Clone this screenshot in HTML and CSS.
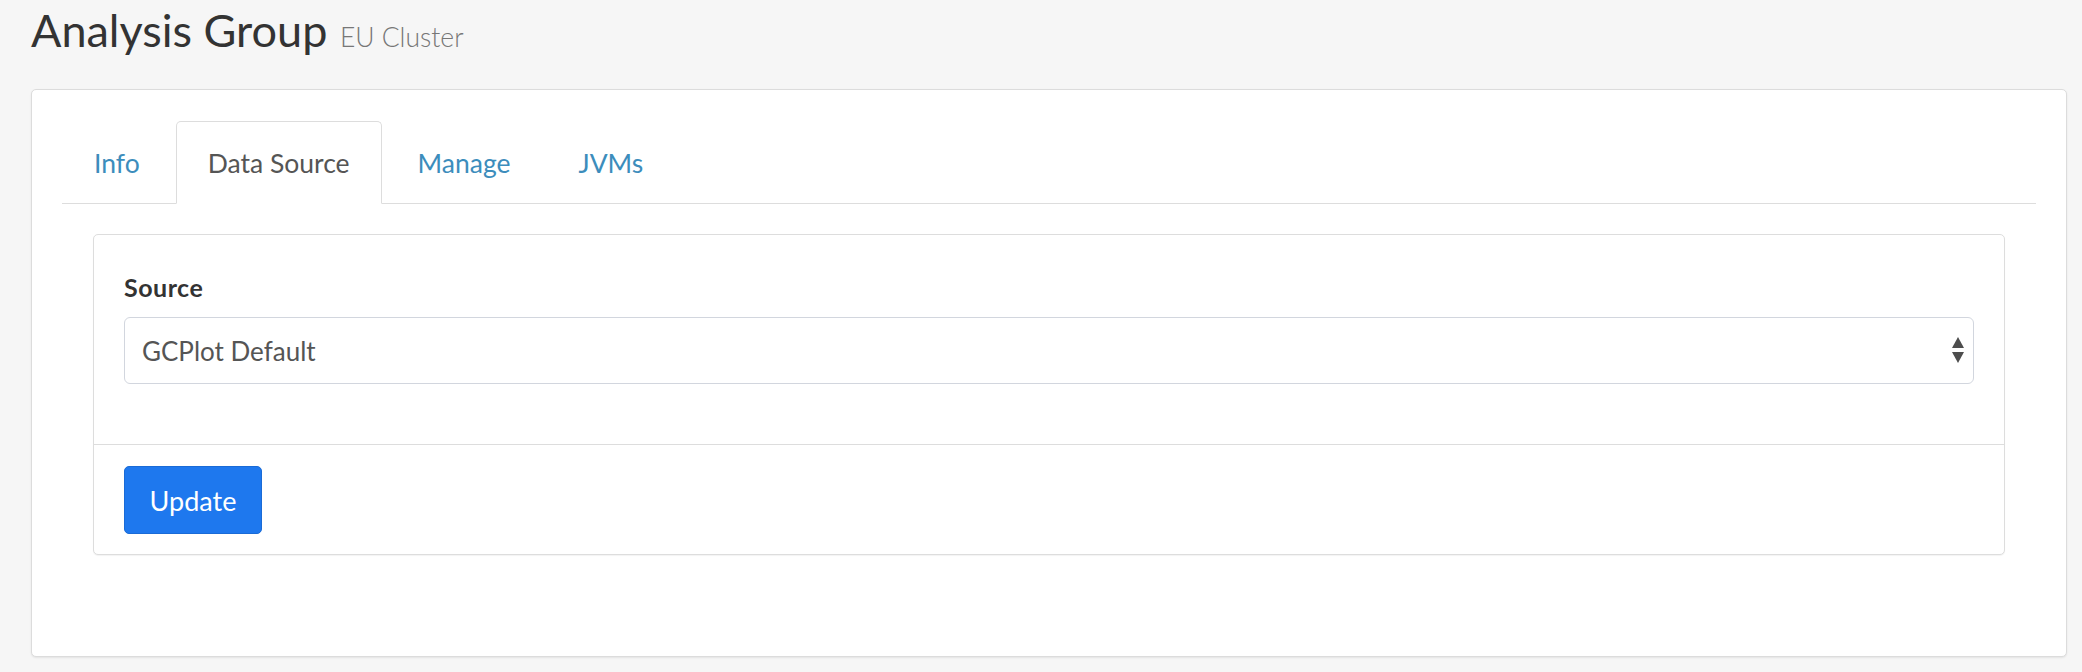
FILE: index.html
```html
<!DOCTYPE html>
<html lang="en">
<head>
<meta charset="utf-8">
<title>Analysis Group</title>
<link rel="stylesheet" href="styles.css">
</head>
<body>
<div class="page">
  <h1 class="title">Analysis Group <small class="subtitle">EU Cluster</small></h1>
  <div class="card">
    <ul class="tabs">
      <li class="tab"><a href="#">Info</a></li>
      <li class="tab active"><a href="#">Data Source</a></li>
      <li class="tab"><a href="#">Manage</a></li>
      <li class="tab"><a href="#">JVMs</a></li>
    </ul>
    <div class="tab-pane">
      <div class="panel">
        <div class="panel-body">
          <label class="field-label" for="source">Source</label>
          <div class="select-wrap">
            <select id="source" class="select">
              <option>GCPlot Default</option>
            </select>
            <svg class="select-arrows" width="12" height="27" viewBox="0 0 12 27" aria-hidden="true">
              <polygon points="6,0 12,11 0,11" fill="#4d4d4d"/>
              <polygon points="0,15 12,15 6,26" fill="#4d4d4d"/>
            </svg>
          </div>
        </div>
        <div class="panel-footer">
          <button class="btn" type="button">Update</button>
        </div>
      </div>
    </div>
  </div>
</div>
</body>
</html>
```

FILE: styles.css
```css
html, body {
  margin: 0;
  padding: 0;
}

body {
  background: #f6f6f6;
  font-family: Lato, "Open Sans", "Liberation Sans", sans-serif;
  color: #333;
}

.page {
  padding: 4px 15px 15px 31px;
}

.title {
  margin: 0 0 33px 0;
  font-size: 45px;
  line-height: 52px;
  height: 52px;
  font-weight: 400;
  color: #333;
}

.subtitle {
  font-size: 26.5px;
  line-height: 1;
  font-weight: 300;
  color: #777;
  margin-left: 1px;
}

.card {
  background: #fff;
  border: 1px solid #dcdcdc;
  border-radius: 5px;
  box-shadow: 0 1px 2px rgba(0, 0, 0, 0.08);
  padding: 31px 30px 30px 30px;
}

.tabs {
  list-style: none;
  margin: 0;
  padding: 0;
  display: flex;
  border-bottom: 1px solid #dddddd;
}

.tab {
  margin: 0 4px -1px 0;
}

.tab a {
  box-sizing: border-box;
  height: 83px;
  display: flex;
  align-items: center;
  padding: 0 31px;
  border: 1px solid transparent;
  border-radius: 5px 5px 0 0;
  font-size: 26.5px;
  color: #3c8dbc;
  text-decoration: none;
}

.tab.active a {
  background: #fff;
  border-color: #dddddd;
  border-bottom-color: #fff;
  color: #555;
}

.tab-pane {
  padding: 30px 31px 71px 31px;
}

.panel {
  border: 1px solid #dddddd;
  border-radius: 5px;
  box-shadow: 0 1px 1px rgba(0, 0, 0, 0.05);
  background: #fff;
}

.panel-body {
  padding: 38px 30px 60px 30px;
  display: flex;
  flex-direction: column;
}

.field-label {
  font-size: 25px;
  line-height: 28px;
  font-weight: 700;
  letter-spacing: 0.5px;
  color: #333;
  margin-bottom: 16px;
}

.select-wrap {
  position: relative;
}

.select {
  box-sizing: border-box;
  width: 100%;
  height: 67px;
  -webkit-appearance: none;
  appearance: none;
  background: #fff;
  border: 1px solid #d2d6de;
  border-radius: 6px;
  padding: 0 40px 0 17px;
  font-family: Lato, "Open Sans", "Liberation Sans", sans-serif;
  font-size: 26px;
  color: #555;
  outline: none;
}

.select-arrows {
  position: absolute;
  right: 10px;
  top: 20px;
  pointer-events: none;
}

.panel-footer {
  border-top: 1px solid #dddddd;
  padding: 21px 30px 20px 30px;
  display: flex;
}

.btn {
  box-sizing: border-box;
  width: 138px;
  height: 68px;
  background: #1e78ee;
  border: 1px solid #1a6bd6;
  border-radius: 5px;
  color: #fff;
  font-family: Lato, "Open Sans", "Liberation Sans", sans-serif;
  font-size: 27px;
  padding: 0;
}
```
